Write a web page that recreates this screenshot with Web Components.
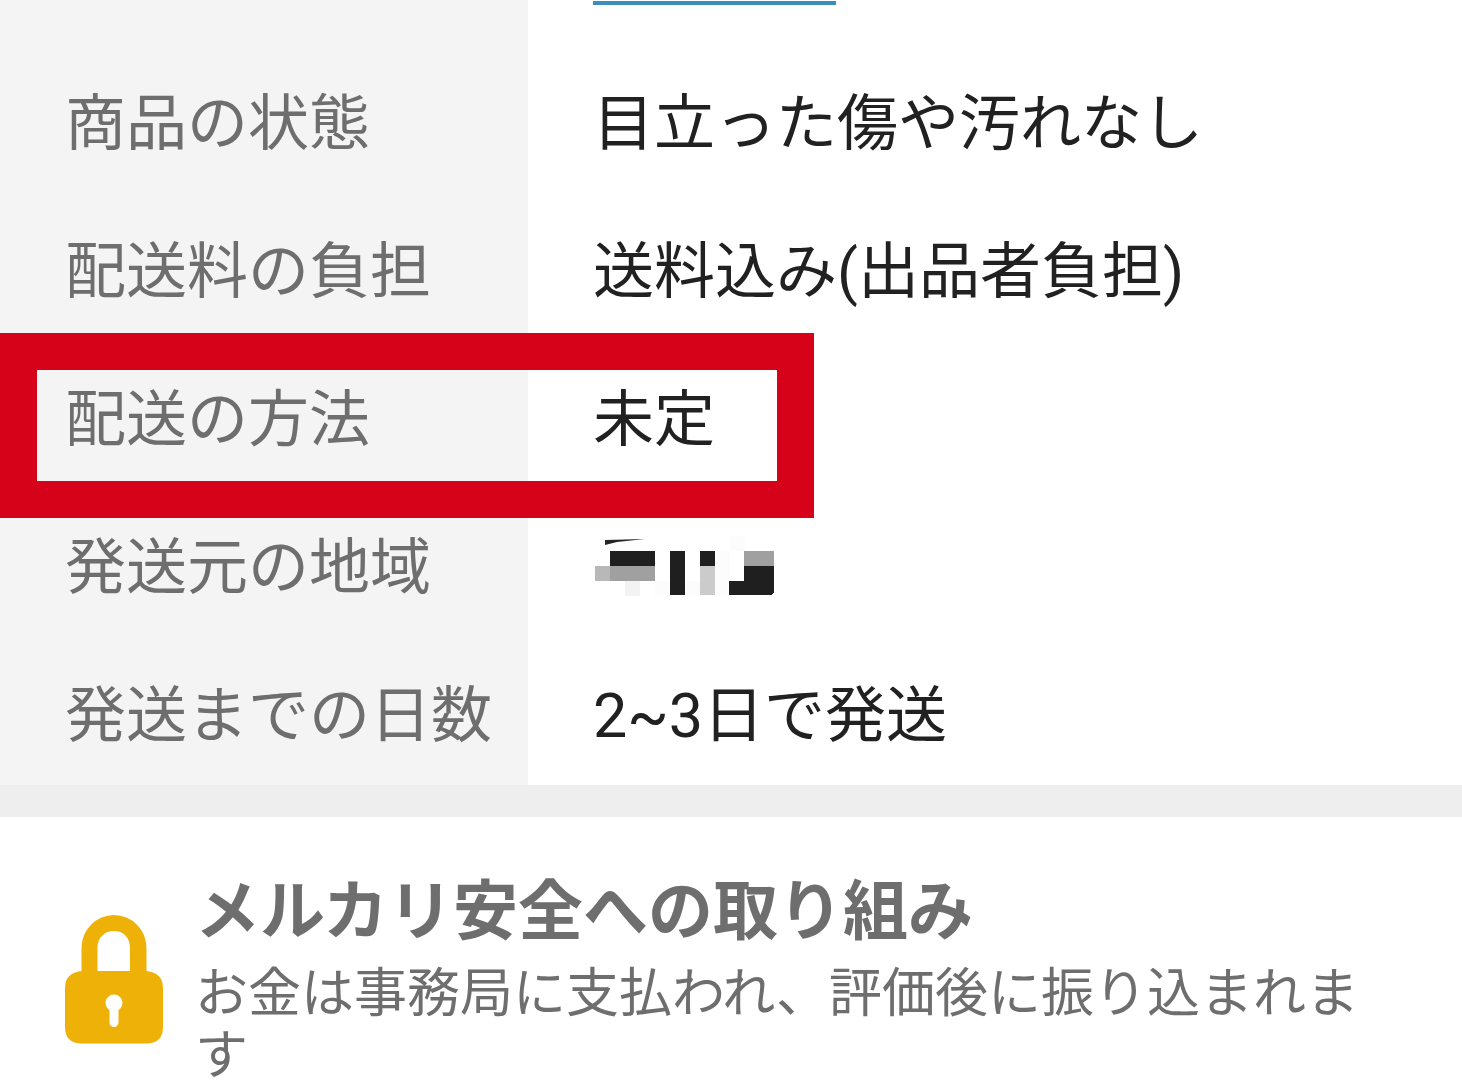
<!DOCTYPE html>
<html lang="ja">
<head>
<meta charset="utf-8">
<meta name="viewport" content="width=device-width">
<title>商品の情報</title>
<style>
html { scrollbar-width: none; }
body { margin: 0; background: #fff; color: #212121; font-family: Roboto, "Noto Sans CJK JP", sans-serif; }
</style>
</head>
<body>
<item-page>
  <info-list>
    <info-row><span slot="label">ブランド</span><brand-link></brand-link></info-row>
    <info-row><span slot="label">商品の状態</span>目立った傷や汚れなし</info-row>
    <info-row><span slot="label">配送料の負担</span>送料込み(出品者負担)</info-row>
    <info-row marked><span slot="label">配送の方法</span>未定</info-row>
    <info-row><span slot="label">発送元の地域</span><masked-value></masked-value></info-row>
    <info-row><span slot="label">発送までの日数</span>2~3日で発送</info-row>
  </info-list>
  <safety-note>
    <lock-icon slot="icon"></lock-icon>
    <span slot="title">メルカリ安全への取り組み</span>
    お金は事務局に支払われ、評価後に振り込まれます
  </safety-note>
</item-page>
<script>
function define(name, html) {
  const template = document.createElement('template');
  template.innerHTML = html;
  customElements.define(name, class extends HTMLElement {
    constructor() {
      super();
      this.attachShadow({ mode: 'open' }).append(template.content.cloneNode(true));
    }
  });
}

define('item-page', `
<style>
  :host { display: flow-root; max-height: 100vh; overflow: hidden; }
</style>
<main><slot></slot></main>`);

// The list is scrolled so that only the end of its first row shows.
define('info-list', `
<style>
  :host { display: flex; flex-direction: column; margin-top: -103px; border-bottom: 32px solid #eee; }
</style>
<slot></slot>`);

define('info-row', `
<style>
  :host { display: grid; grid-template-columns: 528px 1fr; position: relative; height: 148px; font-size: 61px; line-height: 88px; }
  .label, .value { display: flex; align-items: center; padding: 10px 0 0 65px; white-space: nowrap; }
  .label { background: #f4f4f4; color: #6e6e6e; }
  .frame { display: none; }
  :host([marked]) .frame { display: block; position: absolute; z-index: 1; top: -8px; left: 0; width: 814px; height: 185px; box-sizing: border-box; border: 37px solid #d5021a; }
</style>
<div class="label"><slot name="label"></slot></div>
<div class="value"><slot></slot></div>
<div class="frame"></div>`);

define('brand-link', `
<style>
  :host { display: block; }
  a { display: block; width: 243px; height: 54px; border-bottom: 4px solid #3b8dbd; }
</style>
<a href="#brand" aria-label="ブランド"></a>`);

define('masked-value', `
<style>
  :host { display: block; }
  svg { display: block; }
</style>
<svg width="184" height="64" viewBox="593 536 184 64" shape-rendering="crispEdges" aria-hidden="true">
  <path fill="#fcfcfc" d="M730 536h15v15h-15zM655 581h15v15h-15zM685 581h15v15h-15zM715 551h15v45h-15z"/>
  <path fill="#f3f3f3" d="M625 581h15v15h-15z"/>
  <path fill="#b8b8b8" d="M595 566h15v15h-15z"/>
  <path fill="#a0a0a0" d="M610 566h45v15h-45zM744 551h30v15h-30z"/>
  <path fill="#cbcbcb" d="M700 566h15v29h-15z"/>
  <path fill="#1f1f1f" d="M610 551h45v15h-45zM670 551h15v44h-15zM700 551h15v15h-15zM744 566h30v27l-3 2h-42v-14h15z"/>
  <path fill="#252525" shape-rendering="auto" d="M605 540l40-1-28 3-12 3z"/>
</svg>`);

define('safety-note', `
<style>
  :host { display: block; color: #6e6e6e; }
  section { display: flex; align-items: center; gap: 32px; padding: 55px 65px; }
  .text { flex: 1; min-width: 0; display: flex; flex-direction: column; gap: 11px; }
  h2 { margin: 0; font-size: 65px; line-height: 80px; font-weight: 700; }
  p { margin: 0; font-size: 53px; line-height: 62px; }
</style>
<section>
  <slot name="icon"></slot>
  <div class="text">
    <h2><slot name="title"></slot></h2>
    <p><slot></slot></p>
  </div>
</section>`);

define('lock-icon', `
<style>
  :host { display: block; flex: none; }
  svg { display: block; }
</style>
<svg width="98" height="129" viewBox="0 0 98 129" aria-hidden="true">
  <path fill="#edb107" fill-rule="evenodd" d="M16.500 56V33a32.500 33 0 0 1 65 0V56Q98 58 98 73V112Q98 128.500 81 128.500H17Q0 128.500 0 112V73Q0 58 16.500 56ZM32.500 56H65V33C65 22 58 16 49 16S32.500 22 32.500 33Z"/>
  <circle cx="49" cy="88" r="8.500" fill="#fff"/>
  <path d="M49 88V107.500" stroke="#fff" stroke-width="9" stroke-linecap="round"/>
</svg>`);
</script>
</body>
</html>
